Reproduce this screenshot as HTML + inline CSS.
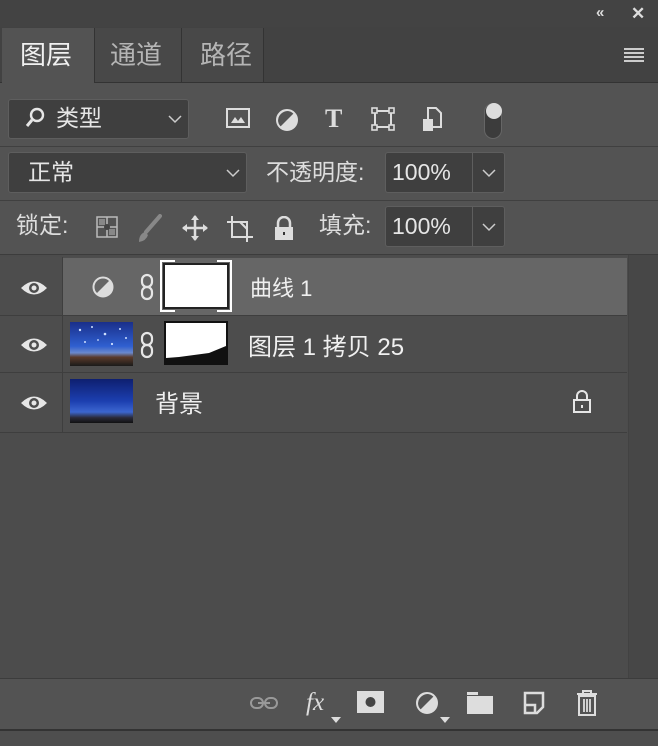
<!DOCTYPE html>
<html><head><meta charset="utf-8"><style>
*{margin:0;padding:0;box-sizing:border-box}
body{width:658px;height:746px;background:#535353;font-family:"Liberation Sans","Noto Sans CJK SC",sans-serif;color:#e6e6e6;position:relative;overflow:hidden}
.a{position:absolute}
.dd{position:absolute;background:#3f3f3f;border:1px solid #5e5e5e;border-radius:3px}
.t{position:absolute;font-size:23px;line-height:1;white-space:nowrap}
svg{position:absolute}
</style></head><body>
<div class="a" style="left:0;top:0;width:658px;height:27px;background:#434343"></div>
<div class="t" style="left:596px;top:5px;font-size:15px;color:#ddd;font-weight:bold">«</div>
<div class="t" style="left:631px;top:5px;font-size:17px;color:#ddd;font-weight:bold">✕</div>
<div class="a" style="left:0;top:27px;width:658px;height:56px;background:#424242;border-bottom:1px solid #333"></div>
<div class="a" style="left:2px;top:28px;width:92px;height:56px;background:#535353"></div>
<div class="a" style="left:94px;top:28px;width:87px;height:54px;background:#484848;border-left:1px solid #333"></div>
<div class="a" style="left:181px;top:28px;width:83px;height:54px;background:#484848;border-left:1px solid #333;border-right:1px solid #333"></div>
<div class="t" style="left:20px;top:42px;font-size:26px;color:#f0f0f0">图层</div>
<div class="t" style="left:110px;top:42px;font-size:26px;color:#b5b5b5">通道</div>
<div class="t" style="left:200px;top:42px;font-size:26px;color:#b5b5b5">路径</div>
<div class="a" style="left:624px;top:48px;width:20px;height:2px;background:#ccc;box-shadow:0 4px 0 #ccc,0 8px 0 #ccc,0 12px 0 #ccc"></div>

<div class="dd" style="left:8px;top:99px;width:181px;height:40px"></div>
<svg style="left:24px;top:107px" width="22" height="22" viewBox="0 0 22 22"><circle cx="13" cy="8" r="6" fill="none" stroke="#e6e6e6" stroke-width="2.4"/><path d="M8 13 L3 19" stroke="#e6e6e6" stroke-width="3"/></svg>
<div class="t" style="left:56px;top:107px">类型</div>
<svg style="left:168px;top:115px" width="14" height="9"><path d="M1 1L7 7L13 1" fill="none" stroke="#ccc" stroke-width="1.5"/></svg>
<svg style="left:226px;top:108px" width="24" height="20"><rect x="1" y="1" width="22" height="18" fill="none" stroke="#ddd" stroke-width="2"/><path d="M5 15 L9 9 L12 13 L15 9 L19 15Z" fill="#ddd"/></svg>
<svg style="left:275px;top:108px" width="24" height="24"><circle cx="12" cy="12" r="10" fill="#ddd"/><path d="M5 19 A10 10 0 0 1 19 5Z" fill="#535353"/><circle cx="12" cy="12" r="10" fill="none" stroke="#ddd" stroke-width="2"/></svg>
<div class="t" style="left:325px;top:106px;font-family:'Liberation Serif',serif;font-weight:bold;font-size:26px;color:#ddd">T</div>
<svg style="left:371px;top:107px" width="24" height="24"><rect x="4" y="4" width="16" height="16" fill="none" stroke="#ddd" stroke-width="2"/><g fill="#535353" stroke="#ddd" stroke-width="1.6"><rect x="1" y="1" width="5" height="5"/><rect x="18" y="1" width="5" height="5"/><rect x="1" y="18" width="5" height="5"/><rect x="18" y="18" width="5" height="5"/></g></svg>
<svg style="left:422px;top:107px" width="20" height="26"><path d="M6 1 H14 L19 6 V20 H6Z" fill="none" stroke="#ddd" stroke-width="2"/><rect x="1" y="12" width="10" height="12" fill="#ddd"/></svg>
<div class="a" style="left:484px;top:103px;width:18px;height:36px;border-radius:9px;background:#3c3c3c;border:1px solid #666"></div>
<div class="a" style="left:486px;top:103px;width:16px;height:16px;border-radius:8px;background:#ddd"></div>

<div class="a" style="left:0;top:146px;width:658px;height:1px;background:#404040"></div>
<div class="dd" style="left:8px;top:152px;width:239px;height:41px"></div>
<div class="t" style="left:28px;top:161px">正常</div>
<svg style="left:226px;top:169px" width="14" height="9"><path d="M1 1L7 7L13 1" fill="none" stroke="#ccc" stroke-width="1.5"/></svg>
<div class="t" style="left:266px;top:161px;color:#ddd">不透明度:</div>
<div class="dd" style="left:385px;top:152px;width:120px;height:41px"></div>
<div class="a" style="left:472px;top:153px;width:1px;height:39px;background:#5e5e5e"></div>
<div class="t" style="left:392px;top:161px">100%</div>
<svg style="left:482px;top:169px" width="14" height="9"><path d="M1 1L7 7L13 1" fill="none" stroke="#ccc" stroke-width="1.5"/></svg>

<div class="a" style="left:0;top:200px;width:658px;height:1px;background:#404040"></div>
<div class="t" style="left:16px;top:214px;color:#ddd">锁定:</div>
<svg style="left:96px;top:216px" width="22" height="22"><rect x="1" y="1" width="20" height="20" fill="none" stroke="#bbb" stroke-width="1.5"/><path d="M1 11H21M11 1V21" stroke="#bbb" stroke-width="1.5"/><rect x="3" y="3" width="6" height="6" fill="#888"/><rect x="13" y="13" width="6" height="6" fill="#888"/><circle cx="11" cy="11" r="3" fill="#444"/></svg>
<svg style="left:136px;top:214px" width="26" height="30"><path d="M24 2 L10 18" stroke="#888" stroke-width="4" stroke-linecap="round"/><path d="M9 18 Q3 20 3 28 Q10 27 12 21Z" fill="#888"/></svg>
<svg style="left:181px;top:214px" width="28" height="28" viewBox="0 0 28 28"><path d="M14 2V26M2 14H26" stroke="#ddd" stroke-width="2.5"/><path d="M14 1 L10 6H18Z M14 27 L10 22H18Z M1 14 L6 10V18Z M27 14 L22 10V18Z" fill="#ddd"/></svg>
<svg style="left:226px;top:215px" width="28" height="28"><path d="M6 1V22H27M1 7H21V27" fill="none" stroke="#ddd" stroke-width="2"/><path d="M14 7 L21 14" stroke="#ddd" stroke-width="2"/></svg>
<svg style="left:273px;top:216px" width="22" height="25"><path d="M5 11V7A6 6 0 0 1 17 7V11" fill="none" stroke="#ddd" stroke-width="2.5"/><rect x="2" y="11" width="18" height="13" fill="#ddd"/><rect x="10" y="16" width="2" height="3" fill="#333"/></svg>
<div class="t" style="left:319px;top:214px;color:#ddd">填充:</div>
<div class="dd" style="left:385px;top:206px;width:120px;height:41px"></div>
<div class="a" style="left:472px;top:207px;width:1px;height:39px;background:#5e5e5e"></div>
<div class="t" style="left:392px;top:215px">100%</div>
<svg style="left:482px;top:223px" width="14" height="9"><path d="M1 1L7 7L13 1" fill="none" stroke="#ccc" stroke-width="1.5"/></svg>

<!-- list -->
<div class="a" style="left:0;top:254px;width:658px;height:424px;background:#4c4c4c;border-top:1px solid #3c3c3c"></div>
<div class="a" style="left:628px;top:255px;width:30px;height:423px;background:#474747;border-left:1px solid #424242"></div>
<div class="a" style="left:0;top:257px;width:627px;height:176px;background:#4d4d4d"></div>
<div class="a" style="left:62px;top:257px;width:1px;height:176px;background:#3e3e3e"></div>
<div class="a" style="left:63px;top:258px;width:564px;height:57px;background:#666"></div>
<div class="a" style="left:0;top:315px;width:627px;height:1px;background:#3e3e3e"></div>
<div class="a" style="left:0;top:372px;width:627px;height:1px;background:#3e3e3e"></div>
<div class="a" style="left:0;top:432px;width:627px;height:1px;background:#3e3e3e"></div>
<svg style="left:20px;top:279px" width="28" height="18"><path d="M1 9 Q14 -4 27 9 Q14 22 1 9Z" fill="#e6e6e6"/><circle cx="14" cy="9" r="5" fill="#4d4d4d"/><circle cx="14" cy="9" r="2.5" fill="#e6e6e6"/></svg>
<svg style="left:20px;top:336px" width="28" height="18"><path d="M1 9 Q14 -4 27 9 Q14 22 1 9Z" fill="#e6e6e6"/><circle cx="14" cy="9" r="5" fill="#4d4d4d"/><circle cx="14" cy="9" r="2.5" fill="#e6e6e6"/></svg>
<svg style="left:20px;top:394px" width="28" height="18"><path d="M1 9 Q14 -4 27 9 Q14 22 1 9Z" fill="#e6e6e6"/><circle cx="14" cy="9" r="5" fill="#4d4d4d"/><circle cx="14" cy="9" r="2.5" fill="#e6e6e6"/></svg>
<!-- row1 -->
<svg style="left:92px;top:276px" width="22" height="22"><circle cx="11" cy="11" r="9.5" fill="#ddd"/><path d="M4 18 A9.5 9.5 0 0 1 18 4Z" fill="#666"/><circle cx="11" cy="11" r="9.5" fill="none" stroke="#ddd" stroke-width="2"/></svg>
<svg style="left:139px;top:273px" width="16" height="28"><rect x="3" y="2" width="10" height="12" rx="5" fill="none" stroke="#e6e6e6" stroke-width="2.2"/><rect x="3" y="14" width="10" height="12" rx="5" fill="none" stroke="#e6e6e6" stroke-width="2.2"/></svg>
<div class="a" style="left:160px;top:260px;width:72px;height:52px;border:2px solid #fff"></div>
<div class="a" style="left:163px;top:263px;width:66px;height:46px;background:#fff;border:2px solid #222"></div>
<div class="a" style="left:175px;top:258px;width:42px;height:4px;background:#666"></div>
<div class="a" style="left:175px;top:310px;width:42px;height:4px;background:#666"></div>
<div class="t" style="left:250px;top:278px;font-size:22px;color:#f0f0f0">曲线 1</div>
<!-- row2 -->
<div class="a" style="left:70px;top:322px;width:63px;height:44px;background:linear-gradient(180deg,#1a2f8a 0%,#2f5fd0 55%,#6a88cc 70%,#5a3a2a 80%,#1a1a1a 100%)"></div>
<svg style="left:70px;top:322px" width="63" height="44"><g fill="#cfe0ff"><circle cx="10" cy="8" r="1.2"/><circle cx="22" cy="5" r="1"/><circle cx="35" cy="12" r="1.3"/><circle cx="50" cy="7" r="1"/><circle cx="15" cy="20" r="1"/><circle cx="42" cy="22" r="1.1"/><circle cx="28" cy="18" r="0.9"/><circle cx="56" cy="16" r="1"/></g></svg>
<svg style="left:139px;top:331px" width="16" height="28"><rect x="3" y="2" width="10" height="12" rx="5" fill="none" stroke="#e6e6e6" stroke-width="2.2"/><rect x="3" y="14" width="10" height="12" rx="5" fill="none" stroke="#e6e6e6" stroke-width="2.2"/></svg>
<svg style="left:164px;top:321px" width="64" height="44"><rect width="64" height="44" fill="#111"/><path d="M2 2 H62 V25 L45 32 L30 34 L15 36 L2 37Z" fill="#fff"/></svg>
<div class="t" style="left:248px;top:336px;font-size:24px;color:#f0f0f0">图层 1 拷贝 25</div>
<!-- row3 -->
<div class="a" style="left:70px;top:379px;width:63px;height:44px;background:linear-gradient(180deg,#0e1f70 0%,#1c3fb0 50%,#3c66d0 75%,#2a2a3a 88%,#111 100%)"></div>
<div class="t" style="left:155px;top:393px;font-size:24px;color:#f0f0f0">背景</div>
<svg style="left:572px;top:390px" width="20" height="24"><path d="M5 10V6A5 5 0 0 1 15 6V10" fill="none" stroke="#e6e6e6" stroke-width="2"/><rect x="2" y="10" width="16" height="12" fill="none" stroke="#e6e6e6" stroke-width="2"/><rect x="9" y="15" width="2" height="3" fill="#e6e6e6"/></svg>

<!-- bottom bar -->
<div class="a" style="left:0;top:678px;width:658px;height:51px;background:#535353;border-top:1px solid #3c3c3c"></div>
<div class="a" style="left:0;top:729px;width:658px;height:2px;background:#333"></div>
<div class="a" style="left:0;top:731px;width:658px;height:15px;background:#4e4e4e"></div>
<svg style="left:249px;top:695px" width="30" height="16"><rect x="2" y="3" width="12" height="10" rx="5" fill="none" stroke="#999" stroke-width="2"/><rect x="16" y="3" width="12" height="10" rx="5" fill="none" stroke="#999" stroke-width="2"/><path d="M9 8H21" stroke="#999" stroke-width="2"/></svg>
<div class="t" style="left:306px;top:690px;font-family:'Liberation Serif',serif;font-style:italic;font-size:25px;color:#ddd">fx</div>
<svg style="left:331px;top:717px" width="10" height="6"><path d="M0 0H10L5 6Z" fill="#ddd"/></svg>
<svg style="left:357px;top:691px" width="27" height="22"><rect width="27" height="22" fill="#ddd"/><circle cx="13.5" cy="11" r="5" fill="#444"/></svg>
<svg style="left:415px;top:691px" width="24" height="24"><circle cx="12" cy="12" r="10" fill="#ddd"/><path d="M5 19 A10 10 0 0 1 19 5Z" fill="#535353"/><circle cx="12" cy="12" r="10" fill="none" stroke="#ddd" stroke-width="2"/></svg>
<svg style="left:440px;top:717px" width="10" height="6"><path d="M0 0H10L5 6Z" fill="#ddd"/></svg>
<svg style="left:467px;top:692px" width="26" height="22"><rect x="0" y="0" width="11" height="3" fill="#ddd"/><rect x="0" y="4" width="26" height="18" fill="#ddd"/></svg>
<svg style="left:523px;top:691px" width="22" height="24"><path d="M2 2H20V16L14 22H2Z" fill="none" stroke="#ddd" stroke-width="2.5"/><path d="M2 14H12V22" fill="none" stroke="#ddd" stroke-width="2.5"/></svg>
<svg style="left:576px;top:690px" width="22" height="27"><path d="M1 4H21M7 4V1H15V4" fill="none" stroke="#ddd" stroke-width="2"/><rect x="3" y="6" width="16" height="19" fill="none" stroke="#ddd" stroke-width="2"/><path d="M8 9V22M11 9V22M14 9V22" stroke="#ddd" stroke-width="1.8"/></svg>
</body></html>
